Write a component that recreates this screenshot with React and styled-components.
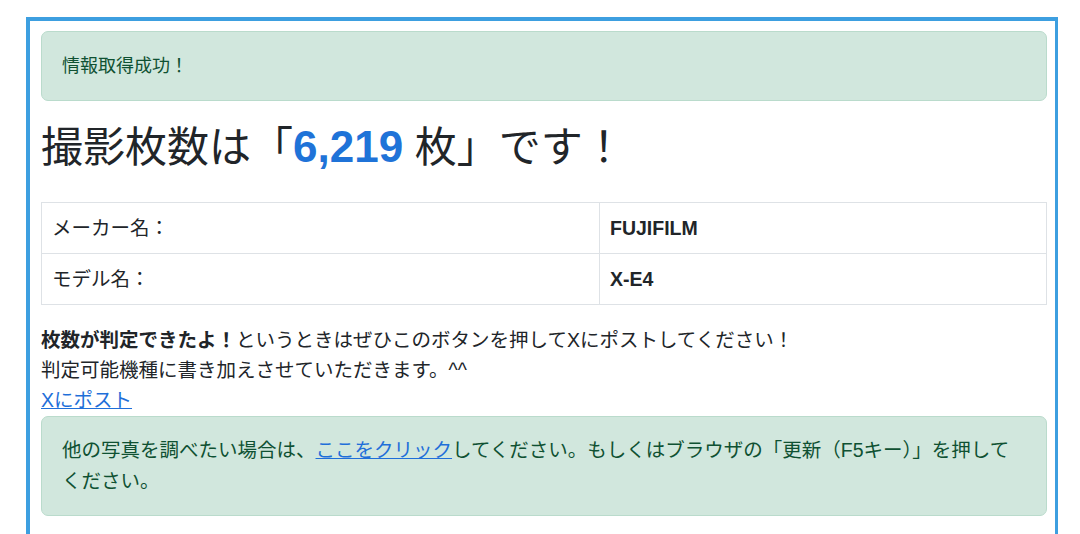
import React from 'react';
import styled, { createGlobalStyle } from 'styled-components';

const GlobalStyle = createGlobalStyle`
    html, body {
        margin: 0;
        padding: 0;
        background: #ffffff;
    }
    body {
        font-family: "Liberation Sans", "Noto Sans CJK JP", sans-serif;
        font-size: 19.5px;
        line-height: 30px;
        color: #212529;
    }
`;

const Page = styled.div`
    height: 532px;
    overflow: hidden;
    border-bottom: 1px solid #d6d6d6;
    padding: 17px 22px 0 26px;
`;

const Frame = styled.div`
    border: 4px solid #3d9fe0;
    border-right-width: 3px;
    padding: 10px 8px 60px 11px;
`;

const Alert = styled.div`
    background: #d1e7dd;
    border: 1px solid #badbcc;
    border-radius: 7px;
    color: #0f5132;
    padding: ${({ $small }) => ($small ? '20px 20px' : '18px 20px')};
    font-size: ${({ $small }) => ($small ? '18px' : '19.5px')};
    line-height: ${({ $small }) => ($small ? '28px' : '31px')};
    margin-bottom: ${({ $gap }) => $gap || 0}px;
`;

const Heading = styled.h1`
    margin: 4px 0 28px;
    font-size: 42px;
    line-height: 52px;
    font-weight: 400;
    color: #212529;
`;

const Count = styled.span`
    color: #1f73d8;
    font-weight: 700;
    font-size: 44px;
`;

const InfoTable = styled.table`
    width: 100%;
    border-collapse: collapse;
    margin-bottom: 20px;
`;

const Cell = styled.td`
    border: 1px solid #dee2e6;
    padding: 10px;
    line-height: 30px;
    font-weight: ${({ $strong }) => ($strong ? 700 : 400)};
    width: ${({ $w }) => ($w ? `${$w}px` : 'auto')};
`;

const Note = styled.p`
    margin: 0 0 1px;
`;

const Link = styled.a`
    color: #1f6fd9;
    text-decoration: underline;
    cursor: pointer;
`;

const rows = [
    { label: 'メーカー名：', value: 'FUJIFILM' },
    { label: 'モデル名：', value: 'X-E4' },
];

const App = () => {
    return (
        <>
            <GlobalStyle />
            <Page>
                <Frame>
                    <Alert $small $gap={20}>情報取得成功！</Alert>

                    <Heading>
                        撮影枚数は「<Count>6,219</Count> 枚」です！
                    </Heading>

                    <InfoTable>
                        <tbody>
                            {rows.map((r) => (
                                <tr key={r.label}>
                                    <Cell $w={537}>{r.label}</Cell>
                                    <Cell $strong>{r.value}</Cell>
                                </tr>
                            ))}
                        </tbody>
                    </InfoTable>

                    <Note>
                        <b>枚数が判定できたよ！</b>というときはぜひこのボタンを押してXにポストしてください！<br />
                        判定可能機種に書き加えさせていただきます。^^<br />
                        <Link href="#">Xにポスト</Link>
                    </Note>

                    <Alert>
                        他の写真を調べたい場合は、<Link href="#">ここをクリック</Link>してください。もしくはブラウザの「更新（F5キー）」を押してください。
                    </Alert>
                </Frame>
            </Page>
        </>
    );
};

export default App;
